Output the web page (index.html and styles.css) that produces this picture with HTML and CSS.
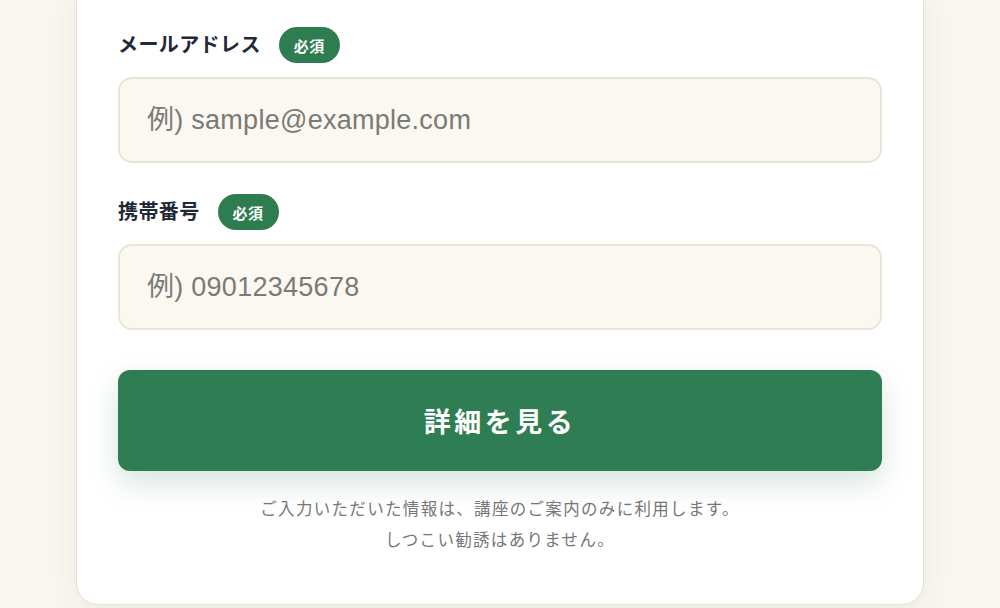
FILE: index.html
```html
<!DOCTYPE html>
<html lang="ja">
<head>
    <meta charset="UTF-8">
    <meta name="viewport" content="width=device-width, initial-scale=1.0">
    <title>講座のご案内</title>
    <link rel="stylesheet" href="styles.css">
</head>
<body>
  <!-- Entry form card -->
  <div class="card">
    <form class="entry-form">
      <div class="field">
        <label class="field-label" for="email">
          <span class="label-text">メールアドレス</span>
          <span class="badge">必須</span>
        </label>
        <input class="text-input" type="email" id="email" placeholder="例) sample@example.com">
      </div>

      <div class="field">
        <label class="field-label" for="tel">
          <span class="label-text">携帯番号</span>
          <span class="badge">必須</span>
        </label>
        <input class="text-input" type="tel" id="tel" placeholder="例) 09012345678">
      </div>

      <button class="submit-btn" type="submit">詳細を見る</button>

      <p class="note">ご入力いただいた情報は、講座のご案内のみに利用します。<br>しつこい勧誘はありません。</p>
    </form>
  </div>
</body>
</html>
```

FILE: styles.css
```css
* { box-sizing: border-box; }
body { margin: 0; height: 608px; overflow: hidden; background-color: #f9f7ef; font-family: "Liberation Sans", "Noto Sans CJK JP", sans-serif; color: #1f2937; }

.card { width: 848px; margin: -31px auto 0; padding: 57px 41px 49px; background-color: #fff; border: 1px solid #e4e1d6; border-radius: 22px; box-shadow: 0 8px 36px rgba(60, 50, 20, 0.07); }

.field { margin-bottom: 31px; }
.field-label { display: flex; align-items: center; gap: 18px; margin-bottom: 14px; }
.label-text { position: relative; top: -2px; font-family: "Noto Sans CJK JP", sans-serif; font-size: 20px; font-weight: 700; letter-spacing: 0.02em; color: #1f2937; }
.badge { display: inline-flex; align-items: center; justify-content: center; height: 36px; padding: 0 15px; border-radius: 18px; background-color: #2e7d50; color: #fff; font-family: "Noto Sans CJK JP", sans-serif; font-size: 15px; font-weight: 700; letter-spacing: 0.03em; }

.text-input { display: block; width: 100%; height: 86px; padding: 0 27px; background-color: #faf8f0; border: 2px solid #e8e6d6; border-radius: 14px; font-family: "Liberation Sans", "Noto Sans CJK JP", sans-serif; font-size: 27px; letter-spacing: 0.01em; color: #333; outline: none; }
.text-input::placeholder { color: #7a7a76; }

.submit-btn { display: block; width: 100%; height: 101px; margin-top: 40px; border: none; border-radius: 12px; background-color: #2f7d52; color: #fff; font-family: "Noto Sans CJK JP", sans-serif; font-size: 27px; font-weight: 700; letter-spacing: 0.13em; cursor: pointer; box-shadow: 0 12px 30px rgba(47, 125, 82, 0.2); }

.note { margin: 22px 0 0; text-align: center; font-family: "Noto Sans CJK JP", sans-serif; font-size: 16.5px; line-height: 31px; letter-spacing: 0.08em; color: #777; }
```
